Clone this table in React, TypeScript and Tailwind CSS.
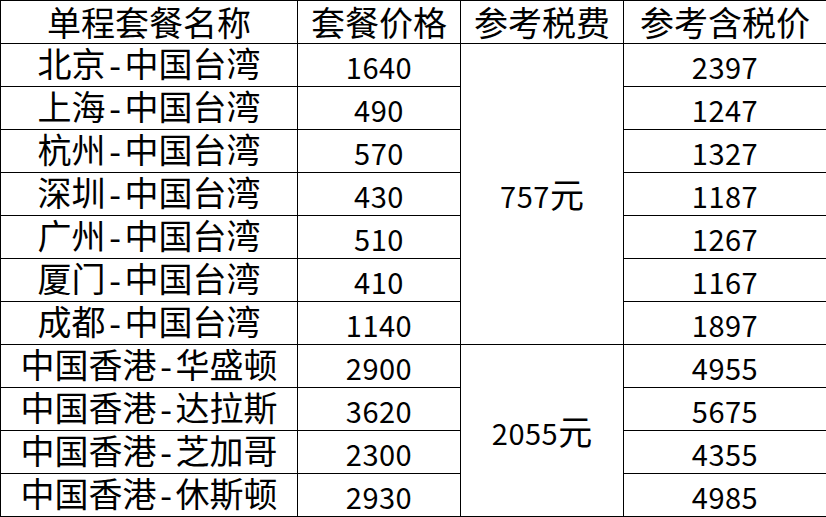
import React from "react";

const taiwan = [
  ["北京", "中国台湾", "1640", "2397"],
  ["上海", "中国台湾", "490", "1247"],
  ["杭州", "中国台湾", "570", "1327"],
  ["深圳", "中国台湾", "430", "1187"],
  ["广州", "中国台湾", "510", "1267"],
  ["厦门", "中国台湾", "410", "1167"],
  ["成都", "中国台湾", "1140", "1897"],
];

const usa = [
  ["中国香港", "华盛顿", "2900", "4955"],
  ["中国香港", "达拉斯", "3620", "5675"],
  ["中国香港", "芝加哥", "2300", "4355"],
  ["中国香港", "休斯顿", "2930", "4985"],
];

const cell = "border border-black text-center align-middle p-0 leading-none";

// SimHei-like look: digits sit smaller than the CJK glyphs
const Num = ({ v }: { v: string }) => <span className="text-[29px] tracking-[0.5px]">{v}</span>;

const Route = ({ from, to }: { from: string; to: string }) => (
  <>
    {from}
    <span className="font-['Liberation_Mono'] text-[32px]">-</span>
    {to}
  </>
);

export default function App() {
  return (
    <div
      className="w-[826px] h-[517px] bg-white text-black text-[34px]"
      style={{ fontFamily: '"Noto Sans CJK SC", "Liberation Sans", sans-serif' }}
    >
      <table className="border-collapse table-fixed w-[826px]">
        <colgroup>
          <col className="w-[297px]" />
          <col className="w-[163px]" />
          <col className="w-[163px]" />
          <col className="w-[203px]" />
        </colgroup>
        <thead>
          <tr className="h-[43px]">
            <th className={cell + " font-normal"}>单程套餐名称</th>
            <th className={cell + " font-normal"}>套餐价格</th>
            <th className={cell + " font-normal"}>参考税费</th>
            <th className={cell + " font-normal"}>参考含税价</th>
          </tr>
        </thead>
        <tbody>
          {taiwan.map((r, i) => (
            <tr key={r[0]} className="h-[43px]">
              <td className={cell}>
                <Route from={r[0]} to={r[1]} />
              </td>
              <td className={cell}>
                <Num v={r[2]} />
              </td>
              {i === 0 && (
                <td className={cell} rowSpan={7}>
                  <Num v="757" />元
                </td>
              )}
              <td className={cell}>
                <Num v={r[3]} />
              </td>
            </tr>
          ))}
          {usa.map((r, i) => (
            <tr key={r[1]} className="h-[43px]">
              <td className={cell}>
                <Route from={r[0]} to={r[1]} />
              </td>
              <td className={cell}>
                <Num v={r[2]} />
              </td>
              {i === 0 && (
                <td className={cell} rowSpan={4}>
                  <Num v="2055" />元
                </td>
              )}
              <td className={cell}>
                <Num v={r[3]} />
              </td>
            </tr>
          ))}
        </tbody>
      </table>
    </div>
  );
}
